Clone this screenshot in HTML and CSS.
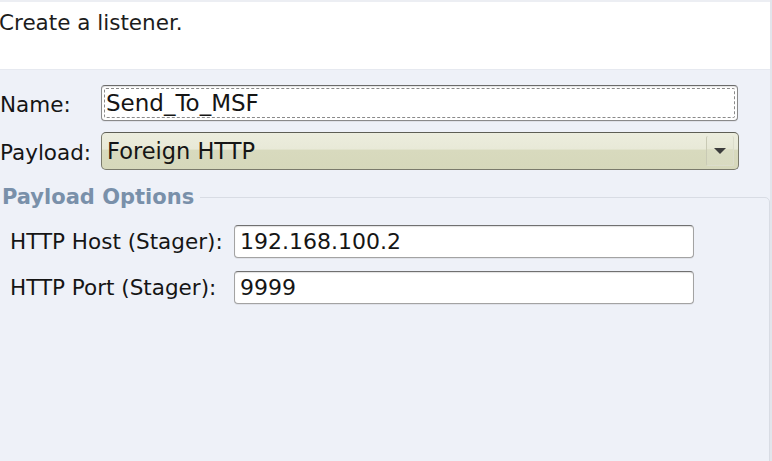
FILE: index.html
```html
<!DOCTYPE html>
<html>
<head>
<meta charset="utf-8">
<link rel="stylesheet" href="styles.css">
</head>
<body>
<div class="window">
  <div class="header"><span class="title">Create a listener.</span></div>
  <div class="form">
    <div class="row row-name">
      <span class="label label-main">Name:</span>
      <div class="field field-focus"><span class="focus-ring">Send_To_MSF</span></div>
    </div>
    <div class="row row-payload">
      <span class="label label-main">Payload:</span>
      <div class="combo">
        <span class="combo-text">Foreign HTTP</span>
        <span class="combo-btn"><svg width="12" height="6" viewBox="0 0 12 6"><path d="M0 0 H12 L6 6 Z" fill="#3c3c3c"/></svg></span>
      </div>
    </div>
    <fieldset class="group">
      <legend class="group-title">Payload Options</legend>
      <div class="row row-opt">
        <span class="label label-opt">HTTP Host (Stager):</span>
        <div class="field field-opt">192.168.100.2</div>
      </div>
      <div class="row row-opt">
        <span class="label label-opt">HTTP Port (Stager):</span>
        <div class="field field-opt">9999</div>
      </div>
    </fieldset>
  </div>
</div>
</body>
</html>
```

FILE: styles.css
```css
html, body {
  margin: 0;
  padding: 0;
  height: 100%;
  overflow: hidden;
}
body {
  background: #eef1f8;
  font-family: "DejaVu Sans", "Liberation Sans", sans-serif;
  font-size: 21.5px;
  color: #151515;
}
.window {
  height: 461px;
  border-right: 2px solid #e2e5eb;
  box-sizing: border-box;
  display: flex;
  flex-direction: column;
  overflow: hidden;
}
.header {
  flex: none;
  background: #ffffff;
  height: 70px;
  border-top: 2px solid #eceef3;
  box-sizing: border-box;
  padding-top: 9px;
  border-bottom: 1px solid #e6e9f0;
}
.title {
  display: block;
  line-height: 24px;
  margin-left: -1px;
  font-size: 21.5px;
  color: #1c1c1c;
}
.form {
  flex: none;
  padding-top: 15px;
  display: flex;
  flex-direction: column;
}
.row {
  display: flex;
  align-items: center;
}
.label-main {
  width: 101px;
  flex: none;
  padding-top: 2px;
}
.row-name {
  height: 36px;
}
.row-payload {
  margin-top: 11px;
  height: 38px;
}
.field {
  box-sizing: border-box;
  background: #ffffff;
  border: 1px solid #a3a3a3;
  border-top-color: #707070;
  border-radius: 4px;
  box-shadow: inset 0 1px 1px rgba(0,0,0,0.12), 0 1px 0 rgba(0,0,0,0.06);
  display: flex;
  align-items: center;
  font-size: 22px;
}
.field-focus {
  width: 637px;
  height: 36px;
  padding: 2px;
  border-color: #8a8a8a;
  border-top-color: #6a6a6a;
}
.focus-ring {
  flex: 1;
  align-self: stretch;
  display: flex;
  align-items: center;
  border: 1px dashed #8a8a8a;
  border-radius: 2px;
  padding-left: 1px;
  line-height: 24px;
  font-size: 23px;
}
.combo {
  box-sizing: border-box;
  width: 638px;
  height: 38px;
  border: 1px solid #7a7a6c;
  border-top-color: #5e5e55;
  border-radius: 5px;
  background: linear-gradient(to bottom, #ecedde 0%, #e8e9d7 45%, #d8dabe 47%, #d6d8bb 100%);
  display: flex;
  align-items: center;
  padding-left: 5px;
  padding-right: 4px;
}
.combo-text {
  flex: 1;
  line-height: 24px;
  font-size: 22.5px;
}
.combo-btn {
  box-sizing: border-box;
  width: 28px;
  height: 30px;
  border-left: 1px solid #c9cab5;
  border-right: 1px solid #dcddcc;
  border-bottom: 1px solid #dcddcc;
  border-radius: 2px;
  display: flex;
  align-items: center;
  justify-content: center;
  background: linear-gradient(to bottom, #ebecdd 0%, #e6e7d4 45%, #dbddc4 47%, #d9dbc1 100%);
}
.group {
  margin: 15px 0 0 -12px;
  padding: 16px 0 0 21px;
  border: 1px solid #d8dce4;
  border-radius: 5px;
  min-height: 400px;
  box-sizing: border-box;
}
.group-title {
  font-weight: bold;
  color: #7990aa;
  padding: 0 6px 0 4px;
  margin-left: -12px;
  font-size: 21px;
  line-height: 24px;
}
.label-opt {
  width: 224px;
  flex: none;
}
.row-opt {
  height: 33px;
  margin-bottom: 13px;
}
.field-opt {
  width: 460px;
  height: 33px;
  padding-left: 5px;
  line-height: 24px;
}
```
